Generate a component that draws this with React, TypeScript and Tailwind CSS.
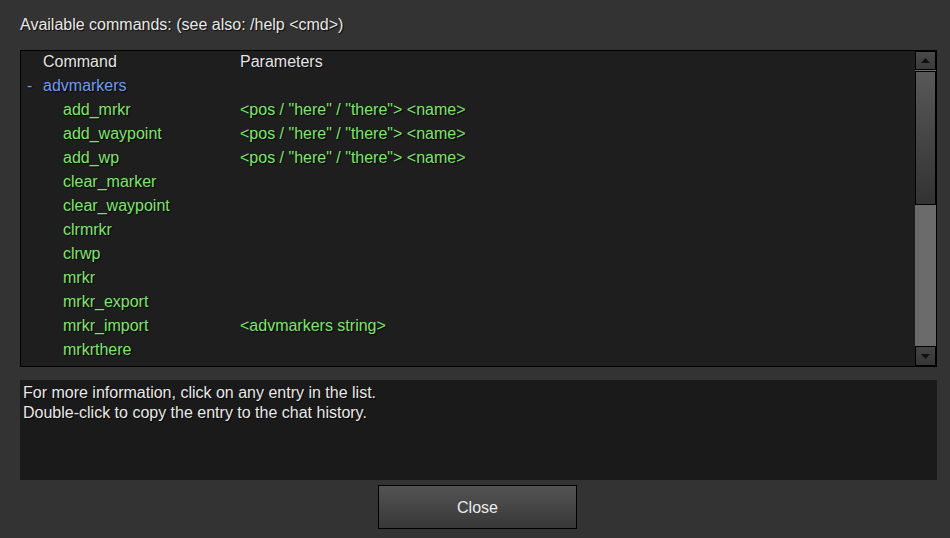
const ROWS: { name: string; params?: string }[] = [
  { name: 'add_mrkr', params: '<pos / "here" / "there"> <name>' },
  { name: 'add_waypoint', params: '<pos / "here" / "there"> <name>' },
  { name: 'add_wp', params: '<pos / "here" / "there"> <name>' },
  { name: 'clear_marker' },
  { name: 'clear_waypoint' },
  { name: 'clrmrkr' },
  { name: 'clrwp' },
  { name: 'mrkr' },
  { name: 'mrkr_export' },
  { name: 'mrkr_import', params: '<advmarkers string>' },
  { name: 'mrkrthere' },
]

const shadow = '[text-shadow:1px_1px_1px_rgba(0,0,0,0.8)]'

export default function App() {
  return (
    <div className={`w-[950px] h-[538px] bg-[#333333] font-['Liberation_Sans',Arial,sans-serif] text-[16px] overflow-hidden ${shadow}`}>
      <div className="h-[50px] pl-[20px] pt-[13px] text-[#e8e8e8]">
        Available commands: (see also: /help &lt;cmd&gt;)
      </div>

      {/* list */}
      <div className="ml-[20px] w-[917px] h-[317px] border border-black bg-[#1e1e1e] flex">
        <div className="flex-1 min-w-0 -mt-[1px]">
          <Row left={<span className="pl-[22px] text-[#e4e4e4]">Command</span>} right={<span className="text-[#e4e4e4]">Parameters</span>} />
          <Row left={<span className="pl-[6px] text-[#6f9cf2]"><span className="inline-block w-[16px]">-</span>advmarkers</span>} />
          {ROWS.map(r => (
            <Row
              key={r.name}
              left={<span className="pl-[42px] text-[#7ee56c]">{r.name}</span>}
              right={r.params && <span className="text-[#7ee56c]">{r.params}</span>}
            />
          ))}
        </div>
        <Scrollbar />
      </div>

      {/* info */}
      <div className="ml-[20px] mt-[13px] w-[917px] h-[100px] bg-[#1a1a1a] px-[3px] pt-[3px] leading-[20px] text-[#e8e8e8]">
        <p>For more information, click on any entry in the list.</p>
        <p>Double-click to copy the entry to the chat history.</p>
      </div>

      <div className="flex justify-center mt-[5px] pl-[5px]">
        <button className="w-[199px] h-[44px] pt-[2px] border border-black bg-gradient-to-b from-[#535353] to-[#383838] text-[16px] text-[#ececec]">
          Close
        </button>
      </div>
    </div>
  )
}

function Row({ left, right }: { left: React.ReactNode; right?: React.ReactNode }) {
  return (
    <div className="h-[24px] flex items-center">
      <div className="w-[219px] shrink-0">{left}</div>
      <div>{right}</div>
    </div>
  )
}

function Scrollbar() {
  return (
    <div className="w-[21px] shrink-0 flex flex-col bg-[#6b6b6b]">
      <div className="h-[19px] border border-black bg-gradient-to-b from-[#4a4a4a] to-[#3a3a3a] flex items-center justify-center">
        <svg width="9" height="5" viewBox="0 0 9 5"><path d="M4.5 0 L9 5 L0 5 Z" fill="#111" /></svg>
      </div>
      <div className="h-[134px] mt-[1px] border border-black bg-gradient-to-b from-[#585858] to-[#333333]" />
      <div className="flex-1" />
      <div className="h-[20px] border border-black bg-gradient-to-b from-[#444444] to-[#353535] flex items-center justify-center">
        <svg width="9" height="5" viewBox="0 0 9 5"><path d="M0 0 L9 0 L4.5 5 Z" fill="#111" /></svg>
      </div>
    </div>
  )
}
